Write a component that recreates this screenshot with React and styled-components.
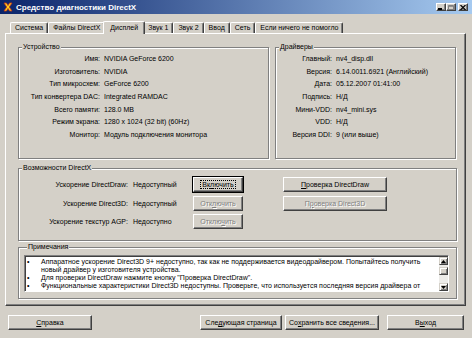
import React from 'react';
import styled, { createGlobalStyle } from 'styled-components';

const GlobalStyle = createGlobalStyle`
  html, body {
    margin: 0;
    padding: 0;
    background: #d4d0c8;
  }
  body {
    font-family: "Liberation Sans", Arial, sans-serif;
    font-size: 7px;
    color: #000;
  }
  * {
    box-sizing: border-box;
  }
`;

const Window = styled.div`
  width: 472px;
  height: 338px;
  background: #d4d0c8;
  display: flex;
  flex-direction: column;
  overflow: hidden;
`;

const TitleBar = styled.div`
  height: 14px;
  flex: none;
  display: flex;
  align-items: center;
  padding: 0 4px 0 3px;
  background: linear-gradient(to right, #0a246a, #a6caf0);
`;

const TitleText = styled.span`
  flex: 1;
  margin-left: 3px;
  color: #fff;
  font-weight: bold;
  font-size: 8px;
  white-space: nowrap;
`;

const Controls = styled.div`
  display: flex;
  align-items: center;
`;

const CtrlButton = styled.div`
  width: 10px;
  height: 8px;
  display: flex;
  align-items: center;
  justify-content: center;
  background: #d4d0c8;
  border: 1px solid;
  border-color: #fff #404040 #404040 #fff;
  box-shadow: inset -1px -1px 0 #808080;
  margin-left: ${p => p.$gap || 0}px;
`;

const Body = styled.div`
  flex: 1;
  display: flex;
  flex-direction: column;
  padding: 7px 6px 0 5px;
`;

const TabStrip = styled.div`
  height: 12px;
  display: flex;
  align-items: flex-end;
  padding-left: 5px;
`;

const Tab = styled.div`
  position: relative;
  height: ${p => (p.$active ? 13 : 11)}px;
  margin: 0 ${p => (p.$active ? -2 : 0)}px ${p => (p.$active ? -1 : 0)}px;
  padding: 0 ${p => (p.$active ? 6 : 4)}px;
  z-index: ${p => (p.$active ? 1 : 0)};
  line-height: ${p => (p.$active ? 11 : 10)}px;
  white-space: nowrap;
  background: #d4d0c8;
  border-top: 1px solid #fff;
  border-left: 1px solid #fff;
  border-right: 1px solid #404040;
  border-radius: 2px 2px 0 0;
  box-shadow: inset -1px 0 0 #808080;
`;

const Panel = styled.div`
  height: 273px;
  display: flex;
  flex-direction: column;
  padding: 9px 8px 0 12px;
  background: #d4d0c8;
  border: 1px solid;
  border-color: #fff #404040 #404040 #fff;
  box-shadow: inset -1px -1px 0 #808080;
`;

const TopRow = styled.div`
  display: grid;
  grid-template-columns: 251px 1fr;
  column-gap: 6px;
  margin-right: 1px;
`;

const Group = styled.fieldset`
  margin: ${p => p.$mt || 0}px 0 0;
  padding: ${p => p.$pad || '1px 0 0'};
  min-inline-size: 0;
  height: ${p => p.$h}px;
  border: 1px solid #808080;
  box-shadow: inset 1px 1px 0 #fff, 1px 1px 0 #fff;
`;

const Legend = styled.legend`
  margin-left: 3px;
  padding: 0 1px;
  line-height: 8px;
  background: #d4d0c8;
`;

const InfoGrid = styled.div`
  display: grid;
  grid-template-columns: ${p => p.$label}px 1fr;
  grid-auto-rows: 12.7px;
  column-gap: 4px;
  align-items: center;
  white-space: nowrap;
`;

const Label = styled.span`
  text-align: right;
`;

const CapsGrid = styled.div`
  display: grid;
  grid-template-columns: 114px 60px 50px 40px 104px;
  grid-template-rows: repeat(3, 15px);
  row-gap: 3.5px;
  align-items: center;
  white-space: nowrap;
`;

const CapsLabel = styled.span`
  text-align: right;
  padding-right: 5px;
`;

const Button = styled.div`
  height: 15px;
  width: ${p => (p.$w ? `${p.$w}px` : 'auto')};
  display: flex;
  align-items: center;
  justify-content: center;
  white-space: nowrap;
  background: #d4d0c8;
  border: 1px solid;
  border-color: #fff #404040 #404040 #fff;
  box-shadow: inset -1px -1px 0 #808080;
  color: ${p => (p.$disabled ? '#808080' : '#000')};
  text-shadow: ${p => (p.$disabled ? '1px 1px 0 #fff' : 'none')};
  outline: ${p => (p.$default ? '1px solid #000' : 'none')};
  outline-offset: 0;
`;

const FocusText = styled.span`
  padding: 0 1px;
  outline: 1px dotted #000;
`;

const NotesList = styled.div`
  height: 37px;
  display: flex;
  background: #fff;
  border: 1px solid;
  border-color: #808080 #fff #fff #808080;
  box-shadow: inset 1px 1px 0 #404040;
  padding: 1px 0 0 1px;
`;

const NotesText = styled.div`
  flex: 1;
  overflow: hidden;
  padding-top: 0.5px;
`;

const Note = styled.div`
  display: grid;
  grid-template-columns: 14px 1fr;
  line-height: 8.2px;
  white-space: nowrap;
  padding-left: 1px;
`;

const ScrollBar = styled.div`
  width: 9px;
  display: flex;
  flex-direction: column;
  background: #ecebe8;
`;

const ScrollBtn = styled.div`
  height: ${p => p.$h || 8}px;
  margin-top: ${p => p.$mt || 0}px;
  display: flex;
  align-items: center;
  justify-content: center;
  background: #d4d0c8;
  border: 1px solid;
  border-color: #d4d0c8 #404040 #404040 #d4d0c8;
  box-shadow: inset 1px 1px 0 #fff, inset -1px -1px 0 #808080;
`;

const Track = styled.div`
  flex: 1;
`;

const Footer = styled.div`
  display: flex;
  align-items: center;
  padding: 9px 0 0 3px;
`;

const FooterRight = styled.div`
  margin-left: auto;
  display: flex;
  align-items: center;
  gap: ${p => p.$gap}px;
  margin-right: 2px;
`;

const U = styled.u`
  text-decoration: underline;
  text-underline-offset: 1px;
`;

function DxIcon() {
  return (
    <svg width="10" height="10" viewBox="0 0 10 10">
      <path d="M1 1 L3.5 1 L5 3.5 L6.5 1 L9 1 L6.3 5 L9 9 L6.5 9 L5 6.5 L3.5 9 L1 9 L3.7 5 Z"
        fill="#ffd21e" stroke="#c0331a" strokeWidth="0.8" strokeLinejoin="round" />
    </svg>
  );
}

function Arrow({ up }) {
  return (
    <svg width="5" height="3" viewBox="0 0 5 3">
      <path d={up ? 'M0 3 L5 3 L2.5 0 Z' : 'M0 0 L5 0 L2.5 3 Z'} fill="#000" />
    </svg>
  );
}

const device = [
  ['Имя:', 'NVIDIA GeForce 6200'],
  ['Изготовитель:', 'NVIDIA'],
  ['Тип микросхем:', 'GeForce 6200'],
  ['Тип конвертера DAC:', 'Integrated RAMDAC'],
  ['Всего памяти:', '128.0 MB'],
  ['Режим экрана:', '1280 x 1024 (32 bit) (60Hz)'],
  ['Монитор:', 'Модуль подключения монитора'],
];

const drivers = [
  ['Главный:', 'nv4_disp.dll'],
  ['Версия:', '6.14.0011.6921 (Английский)'],
  ['Дата:', '05.12.2007 01:41:00'],
  ['Подпись:', 'Н/Д'],
  ['Мини-VDD:', 'nv4_mini.sys'],
  ['VDD:', 'Н/Д'],
  ['Версия DDI:', '9 (или выше)'],
];

const tabs = ['Система', 'Файлы DirectX', 'Дисплей', 'Звук 1', 'Звук 2', 'Ввод', 'Сеть', 'Если ничего не помогло'];

const notes = [
  ['•', 'Аппаратное ускорение Direct3D 9+ недоступно, так как не поддерживается видеодрайвером.  Попытайтесь получить'],
  ['', 'новый драйвер у изготовителя устройства.'],
  ['•', 'Для проверки DirectDraw нажмите кнопку "Проверка DirectDraw".'],
  ['•', 'Функциональные характеристики Direct3D недоступны.  Проверьте, что используется последняя версия драйвера от'],
];

export default function App() {
  return (
    <>
      <GlobalStyle />
      <Window>
        <TitleBar>
          <DxIcon />
          <TitleText>Средство диагностики DirectX</TitleText>
          <Controls>
            <CtrlButton>
              <svg width="6" height="5" viewBox="0 0 6 5"><rect x="0" y="3" width="4" height="2" fill="#000" /></svg>
            </CtrlButton>
            <CtrlButton>
              <svg width="6" height="5" viewBox="0 0 6 5"><path d="M0.5 0.5 H5.5 V4.5 H0.5 Z M0.5 1.3 H5.5" fill="none" stroke="#808080" strokeWidth="1" /></svg>
            </CtrlButton>
            <CtrlButton $gap={2}>
              <svg width="6" height="5" viewBox="0 0 6 5"><path d="M0.5 0 L5.5 5 M5.5 0 L0.5 5" stroke="#000" strokeWidth="1.2" /></svg>
            </CtrlButton>
          </Controls>
        </TitleBar>
        <Body>
          <TabStrip>
            {tabs.map(t => (
              <Tab key={t} $active={t === 'Дисплей'}>{t}</Tab>
            ))}
          </TabStrip>
          <Panel>
            <TopRow>
              <Group $h={116}>
                <Legend>Устройство</Legend>
                <InfoGrid $label={81}>
                  {device.map(([k, v]) => (
                    <React.Fragment key={k}>
                      <Label>{k}</Label>
                      <span>{v}</span>
                    </React.Fragment>
                  ))}
                </InfoGrid>
              </Group>
              <Group $h={116}>
                <Legend>Драйверы</Legend>
                <InfoGrid $label={56}>
                  {drivers.map(([k, v]) => (
                    <React.Fragment key={k}>
                      <Label>{k}</Label>
                      <span>{v}</span>
                    </React.Fragment>
                  ))}
                </InfoGrid>
              </Group>
            </TopRow>
            <Group $h={77} $mt={5} $pad="5px 0 0">
              <Legend>Возможности DirectX</Legend>
              <CapsGrid>
                <CapsLabel>Ускорение DirectDraw:</CapsLabel>
                <span>Недоступный</span>
                <Button $w={50} $default><FocusText>Вк<U>л</U>ючить</FocusText></Button>
                <span />
                <Button $w={104}><span><U>П</U>роверка DirectDraw</span></Button>

                <CapsLabel>Ускорение Direct3D:</CapsLabel>
                <span>Недоступный</span>
                <Button $w={50} $disabled><span>Отк<U>л</U>ючить</span></Button>
                <span />
                <Button $w={104} $disabled><span>П<U>р</U>оверка Direct3D</span></Button>

                <CapsLabel>Ускорение текстур AGP:</CapsLabel>
                <span>Недоступно</span>
                <Button $w={50} $disabled><span>Отклю<U>ч</U>ить</span></Button>
                <span />
                <span />
              </CapsGrid>
            </Group>
            <Group $h={56} $mt={2} $pad="4px 7px 0 5px">
              <Legend>Примечания</Legend>
              <NotesList>
                <NotesText>
                  {notes.map(([b, t], i) => (
                    <Note key={i}>
                      <span>{b}</span>
                      <span>{t}</span>
                    </Note>
                  ))}
                </NotesText>
                <ScrollBar>
                  <ScrollBtn><Arrow up /></ScrollBtn>
                  <ScrollBtn $mt={2} />
                  <Track />
                  <ScrollBtn><Arrow /></ScrollBtn>
                </ScrollBar>
              </NotesList>
            </Group>
          </Panel>
          <Footer>
            <Button $w={84}><span><U>С</U>правка</span></Button>
            <FooterRight $gap={3}>
              <Button $w={82}><span>Сле<U>д</U>ующая страница</span></Button>
              <Button $w={94}><span>Со<U>х</U>ранить все сведения...</span></Button>
              <Button $w={77} style={{ marginLeft: 5 }}><span>В<U>ы</U>ход</span></Button>
            </FooterRight>
          </Footer>
        </Body>
      </Window>
    </>
  );
}
